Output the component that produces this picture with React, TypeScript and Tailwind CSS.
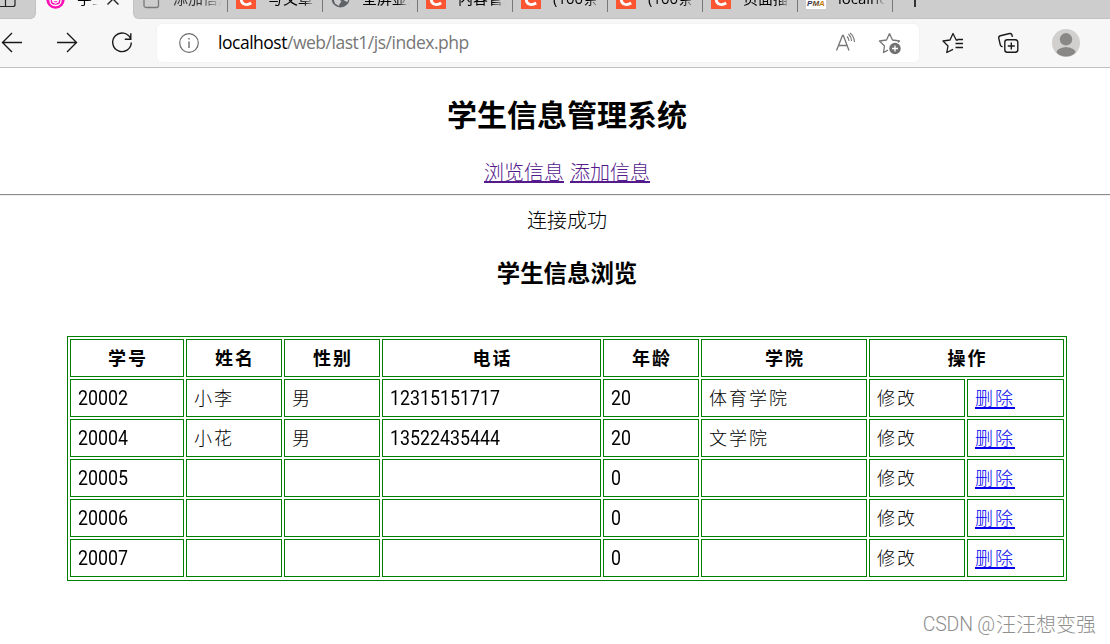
import React from 'react';

const CJK = "font-['Open_Sans','Noto_Sans_CJK_SC',sans-serif]";

function CsdnIcon() {
  return (
    <svg width="20" height="20" viewBox="0 0 20 20" className="shrink-0">
      <rect width="20" height="20" fill="#fc5531" />
      <path d="M15.500 5C9.500 2.200 5 6 5.200 10.500c.2 5 5.300 6.500 10 3.500" fill="none" stroke="#fff" strokeWidth="2.800" />
    </svg>
  );
}

function GlobeIcon() {
  return (
    <svg width="19" height="19" viewBox="0 0 19 19" className="shrink-0">
      <circle cx="9.500" cy="9.500" r="9" fill="#5f6368" />
      <path d="M9 2.500 15 3l3 5-1.500 5-2.500-1-2.500-2-3 .5zM2 8.500l6 1.500 2.500 2.500-2 2.500-.5 2-4-2.500z" fill="#cdcdcd" />
    </svg>
  );
}

function PmaIcon() {
  return (
    <span className="flex h-5 w-5 shrink-0 items-end justify-center bg-white pb-px font-['Liberation_Sans',sans-serif] text-[8px] leading-[8px] font-bold italic">
      <span className="text-[#33335c]">P</span>
      <span className="text-[#5f4526]">M</span>
      <span className="text-[#c67c10]">A</span>
    </span>
  );
}

function Tab({ icon, label }: { icon: React.ReactNode; label: string }) {
  return (
    <div className="flex h-10 w-[95px] shrink-0 items-center pl-[8px]">
      {icon}
      <span className="ml-[12px] h-10 w-[47px] overflow-hidden bg-gradient-to-r from-black from-75% to-transparent bg-clip-text text-[15px] leading-[38px] whitespace-nowrap text-transparent">
        {label}
      </span>
      <span className="ml-auto h-[27px] w-px bg-[#777]" />
    </div>
  );
}

const tabs: { icon: 'c' | 'g' | 'p'; label: string }[] = [
  { icon: 'c', label: '写文章' },
  { icon: 'g', label: '全屏显示' },
  { icon: 'c', label: '内容管理' },
  { icon: 'c', label: '(100条消息)' },
  { icon: 'c', label: '(100条消息)' },
  { icon: 'c', label: '页面插入' },
  { icon: 'p', label: 'localhost' },
];

function TabStrip() {
  return (
    <div className="flex h-[19px] items-end overflow-hidden bg-[#f7f7f7]">
      <div className="flex h-10 w-[36px] shrink-0 items-center rounded-br-[6px] border-r border-b border-[#c2c2c2] bg-[#cdcdcd]">
        <svg width="16" height="18" viewBox="0 0 16 18" fill="none" stroke="#222" strokeWidth="1.200">
          <path d="M0 16.500h13q2 0 2-2V1M5.500 0v16.500" />
        </svg>
      </div>
      <div className="flex h-10 w-[97px] shrink-0 items-center pl-[10px]">
        <svg width="19" height="19" viewBox="0 0 19 19" fill="none">
          <circle cx="9.500" cy="9.500" r="9.200" fill="#ff0fb4" />
          <path d="M4 8v3c0 6 11 6 11 0V8M7 8v4q2.500 2 5 0V8M6 10.500h7" stroke="#fff" strokeWidth="1.300" />
        </svg>
        <span className="ml-[12px] h-10 w-[21px] overflow-hidden bg-gradient-to-r from-black from-50% to-transparent bg-clip-text text-[15px] leading-[38px] whitespace-nowrap text-transparent">
          学生
        </span>
        <svg width="12" height="12" viewBox="0 0 12 12" stroke="#222" strokeWidth="1.400" className="ml-[9px]">
          <path d="m.5.5 11 11M11.500.5l-11 11" />
        </svg>
      </div>
      <div className="flex h-10 grow items-center rounded-bl-[6px] border-b border-l border-[#c2c2c2] bg-[#cdcdcd]">
        <div className="flex h-10 w-[94px] shrink-0 items-center pl-[9px]">
          <svg width="17" height="20" viewBox="0 0 17 20" fill="none" stroke="#777" strokeWidth="1.300">
            <rect x="1" y="1" width="14.500" height="17.500" rx="2" />
          </svg>
          <span className="ml-[13px] h-10 w-[49px] overflow-hidden bg-gradient-to-r from-[#333] from-60% to-transparent bg-clip-text text-[15px] leading-[38px] whitespace-nowrap text-transparent">
            添加信息
          </span>
          <span className="ml-auto h-[27px] w-px bg-[#777]" />
        </div>
        {tabs.map((t, i) => (
          <Tab
            key={i}
            label={t.label}
            icon={t.icon === 'c' ? <CsdnIcon /> : t.icon === 'g' ? <GlobeIcon /> : <PmaIcon />}
          />
        ))}
        <span className="ml-[21px] h-[17px] w-[2px] bg-[#333]" />
        <span className="ml-[151px] h-px w-[11px] bg-[#888]" />
      </div>
    </div>
  );
}

function Toolbar() {
  return (
    <div className="flex h-[49px] items-center border-b border-[#bfbfbf] bg-[#f7f7f7]">
      <svg width="157" height="48" viewBox="0 0 157 48" fill="none" stroke="#1a1a1a" strokeWidth="1.400" className="shrink-0">
        <path d="M22 23.500H2.500M12 14l-9.500 9.500L12 33" />
        <path d="M57 23.500h19.500M67 14l9.500 9.500L67 33" />
        <path d="M130.500 19.500A9.300 9.300 0 1 0 131.300 23.500M130.800 14.200v6h-6" />
      </svg>
      <div className="flex h-[38px] w-[762px] shrink-0 items-center rounded-[5px] bg-white shadow-[0_0_3px_rgba(0,0,0,0.05)]">
        <svg width="20" height="20" viewBox="0 0 20 20" fill="none" stroke="#6b6b6b" strokeWidth="1.200" className="ml-[22px]">
          <circle cx="10" cy="10" r="9.300" />
          <path d="M10 8.500v6.500M10 5v1.500" strokeWidth="1.400" />
        </svg>
        <span className="mb-[2px] ml-[19px] font-['Open_Sans',sans-serif] text-[17.500px] tracking-[-0.480px] whitespace-nowrap text-[#767676]">
          <span className="text-black">localhost</span>/web/last1/js/index.php
        </span>
        <svg width="90" height="38" viewBox="829 24 90 38" fill="none" stroke="#767676" strokeWidth="1.300" className="ml-auto">
          <path d="m836.500 50.500 6-15h.8l5.700 15M838.500 45.500h8.500" />
          <path d="M847 36.500q2 2 2 4.500M848.500 34q3 3 3 7M850 33q4 3 4.500 9" strokeWidth="1.100" />
          <path d="m889.500 33.500 3 6.500 7 1-1.500 1.500M889.500 33.500l-3 6.500-7 1 5 5-1 6.500 4.500-2.300" strokeLinejoin="round" />
          <circle cx="895" cy="48.500" r="5.700" fill="#707070" stroke="none" />
          <path d="M895 45.500v6M892 48.500h6" stroke="#fff" />
        </svg>
      </div>
      <svg width="191" height="48" viewBox="919 19 191 48" fill="none" stroke="#1a1a1a" strokeWidth="1.400" strokeLinejoin="round" className="shrink-0">
        <path d="M958 40h-1.800l-3.200-6.500-3 6.500-7 1 5 5-1.200 6.500 6.200-3.200M955.500 43.500h7.500M955.500 47.500h7.500M957.500 39.500h5.500" strokeWidth="1.300" />
        <rect x="1004.800" y="39.800" width="13" height="12.500" rx="2.500" />
        <path d="M1011.300 42.500v7M1007.800 46h7M1002.500 47l-1-.7q-1-.6-1.200-1.500l-1.500-6.500q-.4-2 1.500-2.500l9.300-2.300q1.800-.4 2.300 1.300l.5 2" />
        <circle cx="1066" cy="43" r="14" fill="#d2d0ce" stroke="none" />
        <circle cx="1066" cy="39.300" r="6.200" fill="#8a8886" stroke="none" />
        <path d="M1056.500 52.500q0-4.500 9.500-5.500 9.500 1 9.500 5.500-3.500 4-9.500 4t-9.500-4" fill="#8a8886" stroke="none" />
      </svg>
    </div>
  );
}

const students = [
  ['20002', '小李', '男', '12315151717', '20', '体育学院'],
  ['20004', '小花', '男', '13522435444', '20', '文学院'],
  ['20005', '', '', '', '0', ''],
  ['20006', '', '', '', '0', ''],
  ['20007', '', '', '', '0', ''],
];

function Cell({ text }: { text: string }) {
  const numeric = /^\d+$/.test(text);
  return (
    <td className="h-[38px] border border-[#008000] py-0 pl-[7px]">
      {numeric ? (
        <span className="block origin-left scale-x-[0.89] font-['Roboto',sans-serif] text-[20px] leading-[36px] font-normal">{text}</span>
      ) : (
        <span className="block text-[18px] leading-[36px] tracking-[2px]">{text}</span>
      )}
    </td>
  );
}

function StudentTable() {
  return (
    <table className="ml-[67px] w-[1000px] table-fixed border-separate border-spacing-[2px] border border-[#008000] pb-px font-light">
      <colgroup>
        <col className="w-[114px]" />
        <col className="w-[96px]" />
        <col className="w-[96px]" />
        <col className="w-[219px]" />
        <col className="w-[96px]" />
        <col className="w-[166px]" />
        <col className="w-[96px]" />
        <col className="w-[97px]" />
      </colgroup>
      <thead>
        <tr>
          {['学号', '姓名', '性别', '电话', '年龄', '学院', '操作'].map((h) => (
            <th
              key={h}
              colSpan={h === '操作' ? 2 : 1}
              className="h-[38px] border border-[#008000] p-0 pl-[2px] text-center text-[18px] leading-[36px] font-bold tracking-[2px]"
            >
              {h}
            </th>
          ))}
        </tr>
      </thead>
      <tbody>
        {students.map((row) => (
          <tr key={row[0]}>
            {row.map((c, i) => (
              <Cell key={i} text={c} />
            ))}
            <Cell text="修改" />
            <td className="h-[38px] border border-[#008000] py-0 pl-[7px] text-[18px] leading-[36px] tracking-[2px]">
              <a href="#" className="text-[#0000ee] underline decoration-2 underline-offset-[2px]">删除</a>
            </td>
          </tr>
        ))}
      </tbody>
    </table>
  );
}

export default function App() {
  return (
    <div className={`relative h-[644px] w-[1110px] overflow-hidden bg-white text-black ${CJK}`}>
      <TabStrip />
      <Toolbar />
      <main className="w-[1134px] pt-[25px] text-center">
        <h1 className="text-[30px] leading-[44px] font-bold">学生信息管理系统</h1>
        <nav className="mt-[21px] flex justify-center gap-[6px] text-[20px] leading-[30px] font-light text-[#551a8b]">
          <a href="#" className="underline decoration-2 underline-offset-[1px]">浏览信息</a>
          <a href="#" className="underline decoration-2 underline-offset-[1px]">添加信息</a>
        </nav>
        <hr className="mt-[6px] border-t border-b border-t-[#8c8c8c] border-b-[#eeeeee]" />
        <p className="mt-[10px] text-[20px] leading-[30px] font-light">连接成功</p>
        <h2 className="mt-[20px] text-[23.400px] leading-[34px] font-bold">学生信息浏览</h2>
        <div className="mt-[46px] text-left">
          <StudentTable />
        </div>
      </main>
      <div className="absolute top-[611px] right-[14px] flex items-center text-[20px] leading-[28px] font-light whitespace-nowrap text-[#8f8f8f]">
        <span className="mr-px font-['Roboto',sans-serif] text-[19.500px] tracking-[-0.200px]">CSDN @</span>
        <span>汪汪想变强</span>
      </div>
    </div>
  );
}
